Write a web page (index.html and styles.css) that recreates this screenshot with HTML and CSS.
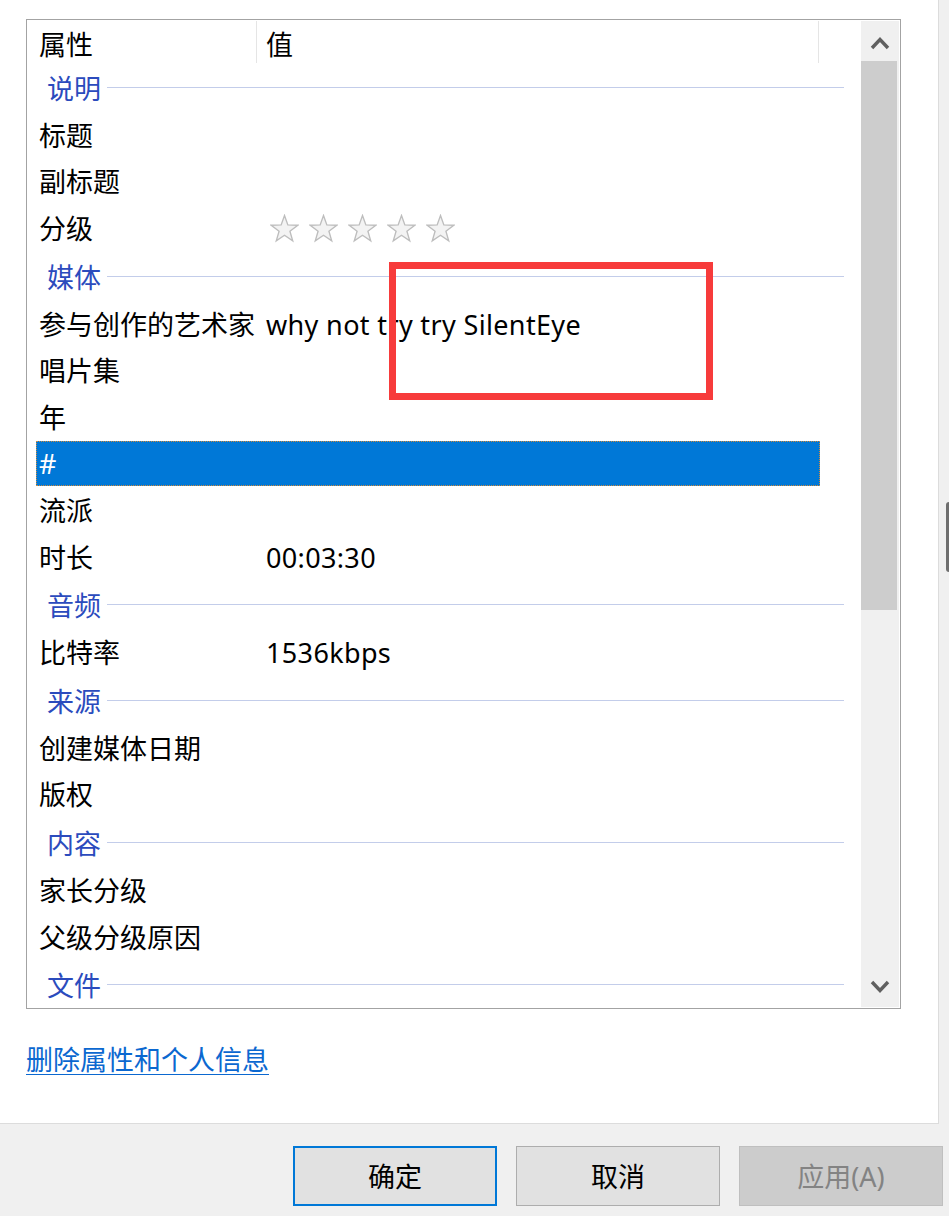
FILE: index.html
```html
<!DOCTYPE html>
<html lang="zh-CN">
<head>
<meta charset="utf-8">
<title>属性</title>
<link rel="stylesheet" href="styles.css">
</head>
<body>
<svg class="defs" width="0" height="0" aria-hidden="true">
  <defs>
    <symbol id="star" viewBox="0 0 28 28">
      <path d="M14 1.5 L17.23 10.55 L26.84 10.83 L19.23 16.7 L21.94 25.92 L14 20.5 L6.06 25.92 L8.77 16.7 L1.16 10.83 L10.77 10.55 Z" fill="#f3f3f3" stroke="#bdbdbd" stroke-width="1.3" stroke-linejoin="miter"/>
    </symbol>
  </defs>
</svg>
<div class="window">
  <div class="main">
    <div class="panel">
      <div class="listbox">
        <div class="list">
          <div class="header">
            <div class="hcol hname">属性</div>
            <div class="hcol hvalue">值</div>
          </div>
          <div class="group"><span class="gtitle">说明</span><span class="gline"></span></div>
          <div class="row"><div class="cells"><div class="name">标题</div><div class="value"></div></div></div>
          <div class="row"><div class="cells"><div class="name">副标题</div><div class="value"></div></div></div>
          <div class="row"><div class="cells"><div class="name">分级</div><div class="value stars">
            <svg class="star"><use href="#star"/></svg>
            <svg class="star"><use href="#star"/></svg>
            <svg class="star"><use href="#star"/></svg>
            <svg class="star"><use href="#star"/></svg>
            <svg class="star"><use href="#star"/></svg>
          </div></div></div>
          <div class="group"><span class="gtitle">媒体</span><span class="gline"></span></div>
          <div class="row"><div class="cells"><div class="name">参与创作的艺术家</div><div class="value">why not try try SilentEye</div></div></div>
          <div class="row"><div class="cells"><div class="name">唱片集</div><div class="value"></div></div></div>
          <div class="row"><div class="cells"><div class="name">年</div><div class="value"></div></div></div>
          <div class="row sel"><div class="cells"><div class="name">#</div><div class="value"></div></div></div>
          <div class="row"><div class="cells"><div class="name">流派</div><div class="value"></div></div></div>
          <div class="row"><div class="cells"><div class="name">时长</div><div class="value">00:03:30</div></div></div>
          <div class="group"><span class="gtitle">音频</span><span class="gline"></span></div>
          <div class="row"><div class="cells"><div class="name">比特率</div><div class="value">1536kbps</div></div></div>
          <div class="group"><span class="gtitle">来源</span><span class="gline"></span></div>
          <div class="row"><div class="cells"><div class="name">创建媒体日期</div><div class="value"></div></div></div>
          <div class="row"><div class="cells"><div class="name">版权</div><div class="value"></div></div></div>
          <div class="group"><span class="gtitle">内容</span><span class="gline"></span></div>
          <div class="row"><div class="cells"><div class="name">家长分级</div><div class="value"></div></div></div>
          <div class="row"><div class="cells"><div class="name">父级分级原因</div><div class="value"></div></div></div>
          <div class="group"><span class="gtitle">文件</span><span class="gline"></span></div>
        </div>
        <div class="scrollbar">
          <div class="sb-btn sb-up">
            <svg width="20" height="14" viewBox="0 0 20 14"><polyline points="2,12 10,3.5 18,12" fill="none" stroke="#606060" stroke-width="3.4"/></svg>
          </div>
          <div class="sb-thumb"></div>
          <div class="sb-track"></div>
          <div class="sb-btn sb-down">
            <svg width="20" height="14" viewBox="0 0 20 14"><polyline points="2,2 10,10.5 18,2" fill="none" stroke="#606060" stroke-width="3.4"/></svg>
          </div>
        </div>
      </div>
      <a class="link" href="#">删除属性和个人信息</a>
      <div class="annotation"></div>
    </div>
    <div class="side"><div class="side-thumb"></div></div>
  </div>
  <div class="footer">
    <button class="btn btn-default">确定</button>
    <button class="btn">取消</button>
    <button class="btn btn-disabled">应用(A)</button>
  </div>
</div>
</body>
</html>
```

FILE: styles.css
```css
* { box-sizing: border-box; }

html, body {
  margin: 0;
  padding: 0;
}

body {
  width: 949px;
  height: 1216px;
  overflow: hidden;
  background: #f0f0f0;
  font-family: "Noto Sans", "Noto Sans CJK SC", sans-serif;
  font-size: 27px;
  color: #000;
}

.defs { position: absolute; width: 0; height: 0; }

.window {
  display: flex;
  flex-direction: column;
  width: 949px;
  height: 1216px;
}

.main {
  display: flex;
  height: 1124px;
}

.panel {
  position: relative;
  width: 939px;
  height: 1124px;
  background: #fff;
  border-right: 1px solid #dcdcdc;
  border-bottom: 1px solid #dcdcdc;
  padding: 19px 0 0 26px;
  display: flex;
  flex-direction: column;
  align-items: flex-start;
}

.listbox {
  width: 875px;
  height: 990px;
  border: 1px solid #a3a3a3;
  padding: 1px 1px 1px 0;
  display: flex;
  background: #fff;
}

.list {
  flex: 1;
  overflow: hidden;
  display: flex;
  flex-direction: column;
}

.header {
  flex: 0 0 42px;
  display: flex;
  align-items: stretch;
}

.hcol {
  display: flex;
  align-items: center;
  padding-top: 4px;
  line-height: 1;
}

.hname {
  width: 230px;
  padding-left: 12px;
  border-right: 1px solid #e5e5e5;
}

.hvalue {
  width: 562px;
  padding-left: 9px;
  border-right: 1px solid #e5e5e5;
}

.group {
  flex: 0 0 49px;
  display: flex;
  align-items: center;
  padding: 2px 17px 0 20px;
  color: #2b4bbd;
  line-height: 1;
}

.gline {
  flex: 1;
  height: 1px;
  margin-left: 6px;
  margin-top: -2px;
  background: #c3cdea;
}

.row {
  flex: 0 0 46.6px;
  display: flex;
  align-items: flex-start;
  padding-left: 9px;
  line-height: 1;
}

.cells {
  width: 784px;
  height: 100%;
  display: flex;
  align-items: center;
  border: 1px solid transparent;
}

.row.sel .cells {
  height: 45px;
  background: #0078d7;
  color: #fff;
  border: 1px dotted #d08a3c;
}

.name {
  width: 221px;
  padding-left: 2px;
  white-space: nowrap;
}

.value {
  padding-left: 8px;
  white-space: nowrap;
  letter-spacing: 0.35px;
}

.stars {
  display: flex;
  gap: 10px;
  padding-left: 12px;
}

.star {
  width: 29px;
  height: 29px;
}

.scrollbar {
  width: 38px;
  background: #f0f0f0;
  display: flex;
  flex-direction: column;
}

.sb-btn {
  flex: 0 0 40px;
  display: flex;
  justify-content: center;
  align-items: flex-start;
}

.sb-up { padding-top: 15px; }
.sb-down { padding-top: 13px; }

.sb-thumb {
  flex: 0 0 549px;
  width: 36px;
  background: #cdcdcd;
}

.sb-track { flex: 1; }

.link {
  margin-top: 37px;
  color: #0b68d0;
  text-decoration: underline;
  text-underline-offset: 4px;
  text-decoration-thickness: 1px;
  line-height: 1;
  white-space: nowrap;
}

.annotation {
  position: absolute;
  left: 389px;
  top: 262px;
  width: 324px;
  height: 138px;
  border: 7px solid #f73b3b;
}

.side {
  flex: 1;
  display: flex;
  flex-direction: column;
  padding: 502px 0 0 7px;
}

.side-thumb {
  width: 3px;
  height: 70px;
  background: #6e6e6e;
  border-radius: 3px 0 0 3px;
}

.footer {
  flex: 1;
  display: flex;
  justify-content: flex-end;
  align-items: flex-start;
  gap: 19px;
  padding: 22px 6px 0 0;
}

.btn {
  width: 204px;
  height: 60px;
  margin: 0;
  padding: 0;
  font-family: "Noto Sans", "Noto Sans CJK SC", sans-serif;
  font-size: 27px;
  line-height: 1;
  color: #000;
  background: #e1e1e1;
  border: 1px solid #adadad;
  border-radius: 0;
  display: flex;
  align-items: center;
  justify-content: center;
}

.btn-default {
  border: 2px solid #0078d7;
}

.btn-disabled {
  background: #cccccc;
  border-color: #bfbfbf;
  color: #838383;
}
```
